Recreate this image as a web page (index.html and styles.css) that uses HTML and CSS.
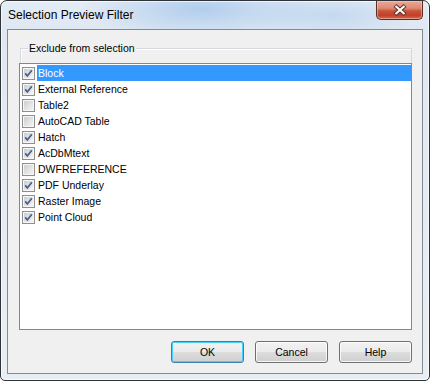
FILE: index.html
```html
<!DOCTYPE html>
<html lang="en">
<head>
  <meta charset="UTF-8" />
  <title>Selection Preview Filter</title>
  <link rel="stylesheet" href="styles.css">
</head>
<body>

<svg width="0" height="0" class="defs">
  <defs>
    <linearGradient id="boxfill" x1="0" y1="0" x2="1" y2="1">
      <stop offset="0" stop-color="#cbced3"/>
      <stop offset="1" stop-color="#f4f4f4"/>
    </linearGradient>
  </defs>
  <symbol id="box" viewBox="0 0 13 13">
    <rect x="0.5" y="0.5" width="12" height="12" fill="#f6f6f6" stroke="#8e8f8f"/>
    <rect x="2" y="2" width="9" height="9" fill="url(#boxfill)"/>
  </symbol>
  <symbol id="tick" viewBox="0 0 13 13">
    <path d="M3.2 6.4 L5.4 8.9 L9.8 3.2" fill="none" stroke="#4a5d8f" stroke-width="1.7"/>
  </symbol>
</svg>

<div class="window">
  <div class="titlebar">
    <span class="title">Selection Preview Filter</span>
    <div class="close">
      <svg width="16" height="12" viewBox="0 0 16 12">
        <path d="M3 1.5 L13 10.5 M13 1.5 L3 10.5" stroke="#5b2a22" stroke-width="4"/>
        <path d="M3.5 2 L12.5 10 M12.5 2 L3.5 10" stroke="#fff" stroke-width="2.2"/>
      </svg>
    </div>
  </div>

  <div class="client">
    <div class="group">
      <div class="legend">Exclude from selection</div>
      <div class="list">
        <div class="row selected"><svg class="cb"><use href="#box"/><use href="#tick"/></svg><span class="label">Block</span></div>
        <div class="row"><svg class="cb"><use href="#box"/><use href="#tick"/></svg><span class="label">External Reference</span></div>
        <div class="row"><svg class="cb"><use href="#box"/></svg><span class="label">Table2</span></div>
        <div class="row"><svg class="cb"><use href="#box"/></svg><span class="label">AutoCAD Table</span></div>
        <div class="row"><svg class="cb"><use href="#box"/><use href="#tick"/></svg><span class="label">Hatch</span></div>
        <div class="row"><svg class="cb"><use href="#box"/><use href="#tick"/></svg><span class="label">AcDbMtext</span></div>
        <div class="row"><svg class="cb"><use href="#box"/></svg><span class="label">DWFREFERENCE</span></div>
        <div class="row"><svg class="cb"><use href="#box"/><use href="#tick"/></svg><span class="label">PDF Underlay</span></div>
        <div class="row"><svg class="cb"><use href="#box"/><use href="#tick"/></svg><span class="label">Raster Image</span></div>
        <div class="row"><svg class="cb"><use href="#box"/><use href="#tick"/></svg><span class="label">Point Cloud</span></div>
      </div>
    </div>

    <div class="buttons">
      <button class="btn default">OK</button>
      <button class="btn">Cancel</button>
      <button class="btn">Help</button>
    </div>
  </div>
</div>

</body>
</html>
```

FILE: styles.css
```css
body {
  margin: 0;
  padding: 0;
  width: 430px;
  height: 381px;
  background: #ffffff;
  font-family: "Liberation Sans", Arial, sans-serif;
  font-size: 10.5px;
  color: #000;
}

.defs {
  position: absolute;
  width: 0;
  height: 0;
}

.window {
  box-sizing: border-box;
  width: 430px;
  height: 381px;
  border: 1px solid #2f3236;
  border-radius: 7px 7px 5px 5px;
  padding: 0 6px 6px;
  background:
    radial-gradient(ellipse 120px 30px at 200px 8px, rgba(160, 195, 235, 0.75), rgba(160, 195, 235, 0) 100%),
    radial-gradient(ellipse 90px 25px at 330px 14px, rgba(175, 205, 238, 0.6), rgba(175, 205, 238, 0) 100%),
    linear-gradient(to bottom, #e4ecf5 0, #dfe8f2 30px, #e9eef4 100%);
  box-shadow: inset 0 0 0 1px rgba(255, 255, 255, 0.7);
}

.titlebar {
  height: 28px;
  display: flex;
  justify-content: space-between;
  align-items: flex-start;
}

.title {
  font-size: 12px;
  padding: 7px 0 0 1px;
  line-height: 15px;
  color: #000;
}

.close {
  width: 47px;
  height: 19px;
  box-sizing: border-box;
  border: 1px solid #5c2c24;
  border-top: none;
  border-radius: 0 0 5px 5px;
  background: linear-gradient(to bottom, #e9a898 0, #dd8a74 40%, #c8533b 55%, #c2402a 80%, #d36a4f 100%);
  box-shadow: inset 0 0 0 1px rgba(255, 220, 210, 0.45);
  display: flex;
  justify-content: center;
  align-items: center;
}

.client {
  box-sizing: border-box;
  height: 345px;
  border: 1px solid #838a93;
  background: #f0f0f0;
  display: flex;
  flex-direction: column;
}

.group {
  margin: 18px 10px 0 12px;
  border: 1px solid #d5d9dd;
  border-bottom: none;
  box-shadow: inset 1px 1px 0 #ffffff;
}

.legend {
  display: table;
  margin: -7px 0 0 7px;
  padding: 0 1px;
  line-height: 13px;
  background: #f0f0f0;
}

.list {
  box-sizing: border-box;
  width: 393px;
  height: 267px;
  margin: 8px 0 0 -2px;
  border: 1px solid #828790;
  background: #ffffff;
  padding: 1px 0 0;
}

.row {
  height: 16px;
  display: flex;
  align-items: center;
}

.cb {
  width: 13px;
  height: 13px;
  margin-left: 2px;
  flex-shrink: 0;
}

.label {
  margin-left: 2px;
  padding-left: 1px;
  flex: 1;
  height: 16px;
  line-height: 16px;
}

.row.selected .label {
  background: #3399ff;
  color: #ffffff;
}

.buttons {
  display: flex;
  justify-content: flex-end;
  gap: 11px;
  margin: 11px 10px 0 0;
}

.btn {
  width: 73px;
  height: 22px;
  box-sizing: border-box;
  border: 1px solid #707070;
  border-radius: 3px;
  background: linear-gradient(to bottom, #f2f2f2 0, #ebebeb 50%, #dddddd 51%, #cfcfcf 100%);
  box-shadow: inset 0 0 0 1px rgba(255, 255, 255, 0.8);
  font-family: "Liberation Sans", Arial, sans-serif;
  font-size: 10.5px;
  color: #000;
  padding: 0;
}

.btn.default {
  border-color: #3c7fb1;
  box-shadow: inset 0 0 0 1px #48d1f7;
}
```
